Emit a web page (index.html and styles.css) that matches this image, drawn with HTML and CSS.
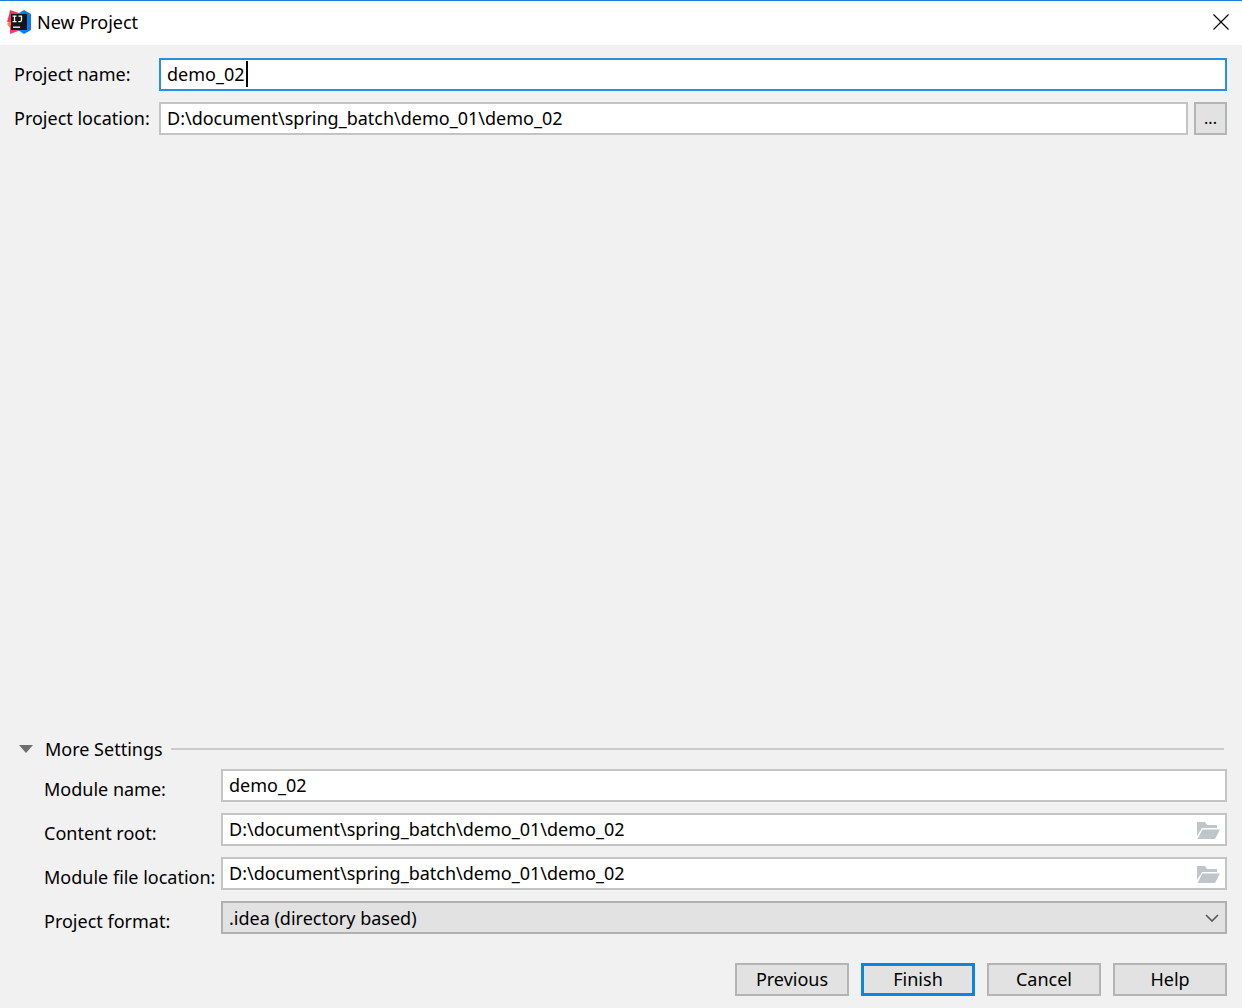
FILE: index.html
```html
<!DOCTYPE html>
<html lang="en">
<head>
    <meta charset="UTF-8">
    <meta name="viewport" content="width=device-width, initial-scale=1.0">
    <title>New Project</title>
    <link rel="stylesheet" href="styles.css">
</head>
<body>
    <header class="titlebar">
        <svg class="logo" viewBox="0 0 24 24" aria-hidden="true">
            <path fill="#fc8a2c" d="M0 14 L5 8 L8 18 L3 18 Z"/>
            <path fill="#fe315d" d="M3 0 L15 4 L12 12 L0 12 L2 5 Z"/>
            <path fill="#f43f74" d="M3 15 L14 20 L3 24 Z"/>
            <path fill="#087cfa" d="M12 3 L17 0 L24 4 L24 20 L17 24 L11 20 Z"/>
            <rect fill="#151515" x="4" y="4" width="16" height="16"/>
            <path fill="none" stroke="#fff" stroke-width="1.3" d="M5.5 6.2 H9.5 M7.5 6 V12 M5.5 11.6 H9.5 M11.5 6.2 H15 M14.5 6 V10 Q14.5 11.6 13 11.6 H11.3"/>
            <rect fill="#fff" x="6" y="16.5" width="7" height="1.3"/>
        </svg>
        <h1>New Project</h1>
        <button type="button" class="close" aria-label="Close">
            <svg width="16" height="16" viewBox="0 0 16 16"><path fill="none" stroke="#000" stroke-width="1.2" d="M0.5 0.5 L15.5 15.5 M15.5 0.5 L0.5 15.5"/></svg>
        </button>
    </header>

    <form class="dialog">
        <div class="row">
            <label for="pname">Project name:</label>
            <div class="field active">
                <input type="text" id="pname" value="demo_02">
                <span class="caret"></span>
            </div>
        </div>
        <div class="row">
            <label for="plocation">Project location:</label>
            <div class="field">
                <input type="text" id="plocation" value="D:\document\spring_batch\demo_01\demo_02">
            </div>
            <button type="button" class="btn more">...</button>
        </div>

        <fieldset class="settings">
            <legend class="heading">
                <svg width="14" height="8" viewBox="0 0 14 8"><path fill="#6e6e6e" d="M0 0 H14 L7 8 Z"/></svg>
                <span>More Settings</span>
            </legend>
            <div class="row">
                <label for="mname">Module name:</label>
                <div class="field">
                    <input type="text" id="mname" value="demo_02">
                </div>
            </div>
            <div class="row">
                <label for="root">Content root:</label>
                <div class="field">
                    <input type="text" id="root" value="D:\document\spring_batch\demo_01\demo_02">
                    <button type="button" class="browse" aria-label="Browse content root">
                        <svg width="23" height="17" viewBox="0 0 23 17"><path fill="#bfc5c9" d="M0 0 H8 L10 3 H20 V6 H5 L0 14 Z M5.5 7.5 H23 L18 17 H0.5 Z"/></svg>
                    </button>
                </div>
            </div>
            <div class="row">
                <label for="mlocation">Module file location:</label>
                <div class="field">
                    <input type="text" id="mlocation" value="D:\document\spring_batch\demo_01\demo_02">
                    <button type="button" class="browse" aria-label="Browse module file location">
                        <svg width="23" height="17" viewBox="0 0 23 17"><path fill="#bfc5c9" d="M0 0 H8 L10 3 H20 V6 H5 L0 14 Z M5.5 7.5 H23 L18 17 H0.5 Z"/></svg>
                    </button>
                </div>
            </div>
            <div class="row">
                <label for="format">Project format:</label>
                <div class="field select">
                    <select id="format">
                        <option>.idea (directory based)</option>
                    </select>
                    <svg class="chevron" width="14" height="8" viewBox="0 0 14 8"><path fill="none" stroke="#555" stroke-width="1.6" d="M1 1 L7 7 L13 1"/></svg>
                </div>
            </div>
        </fieldset>

        <div class="actions">
            <button type="button" class="btn">Previous</button>
            <button type="submit" class="btn primary">Finish</button>
            <button type="button" class="btn">Cancel</button>
            <button type="button" class="btn">Help</button>
        </div>
    </form>
</body>
</html>
```
FILE: styles.css
```css
* {
  box-sizing: border-box;
}
body {
  margin: 0;
  min-height: 100vh;
  display: flex;
  flex-direction: column;
  background: #f1f1f1;
  color: #000;
  font-family: "Noto Sans", "Open Sans", sans-serif;
  font-size: 18px;
  line-height: 24px;
}
input,
select,
button {
  font: inherit;
  color: inherit;
}

.titlebar {
  display: flex;
  align-items: center;
  gap: 6px;
  height: 45px;
  padding: 0 13px 2px 7px;
  background: #fff;
  border-top: 1px solid #1880d7;
}
.titlebar h1 {
  flex: 1;
  margin: 0;
  font-size: 18px;
  font-weight: 400;
}
.logo {
  width: 24px;
  height: 24px;
}
.close {
  display: flex;
  padding: 0;
  border: none;
  background: none;
}

.dialog {
  flex: 1;
  display: flex;
  flex-direction: column;
  gap: 11px;
  padding: 13px 15px 12px 14px;
}
.row {
  display: flex;
  align-items: center;
}
.row label {
  width: 145px;
  padding-bottom: 2px;
  flex-shrink: 0;
  white-space: nowrap;
}
.field {
  position: relative;
  flex: 1;
  display: flex;
  align-items: center;
  height: 33px;
  background: #fff;
  border: 2px solid #c4c4c4;
}
.field input {
  flex: 1;
  min-width: 0;
  height: 100%;
  padding: 0 6px 2px;
  border: none;
  outline: none;
  background: none;
}
.active {
  border-color: #2490e3;
}
.caret {
  position: absolute;
  left: 85px;
  top: 1px;
  width: 2px;
  height: 26px;
  background: #000;
}
.browse {
  display: flex;
  padding: 2px 5px 0;
  border: none;
  background: none;
}

.btn {
  width: 114px;
  height: 33px;
  padding: 0 0 2px;
  border: 2px solid #b4b4b4;
  background: #e2e2e2;
}
.more {
  width: 33px;
  margin-left: 6px;
  font-size: 16px;
}
.primary {
  border: 3px solid #0a86e0;
}

.settings {
  display: flex;
  flex-direction: column;
  gap: 11px;
  min-width: 0;
  margin: auto 0 0;
  padding: 0;
  border: none;
}
.settings .row {
  padding-left: 30px;
}
.settings .row label {
  width: 177px;
  padding: 6px 0 0;
}
.heading {
  display: flex;
  align-items: center;
  gap: 8px;
  width: 100%;
  margin-bottom: 8px;
  padding: 0 3px 0 5px;
}
.heading svg {
  margin-right: 4px;
}
.heading::after {
  content: "";
  flex: 1;
  height: 2px;
  background: #cacaca;
}
.select {
  background: #e2e2e2;
  border-color: #b0b0b0;
}
.select select {
  flex: 1;
  height: 100%;
  padding: 0 6px;
  border: none;
  outline: none;
  background: none;
  appearance: none;
}
.chevron {
  position: absolute;
  right: 6px;
  pointer-events: none;
}

.actions {
  display: flex;
  justify-content: flex-end;
  gap: 12px;
  margin-top: 18px;
}
```
